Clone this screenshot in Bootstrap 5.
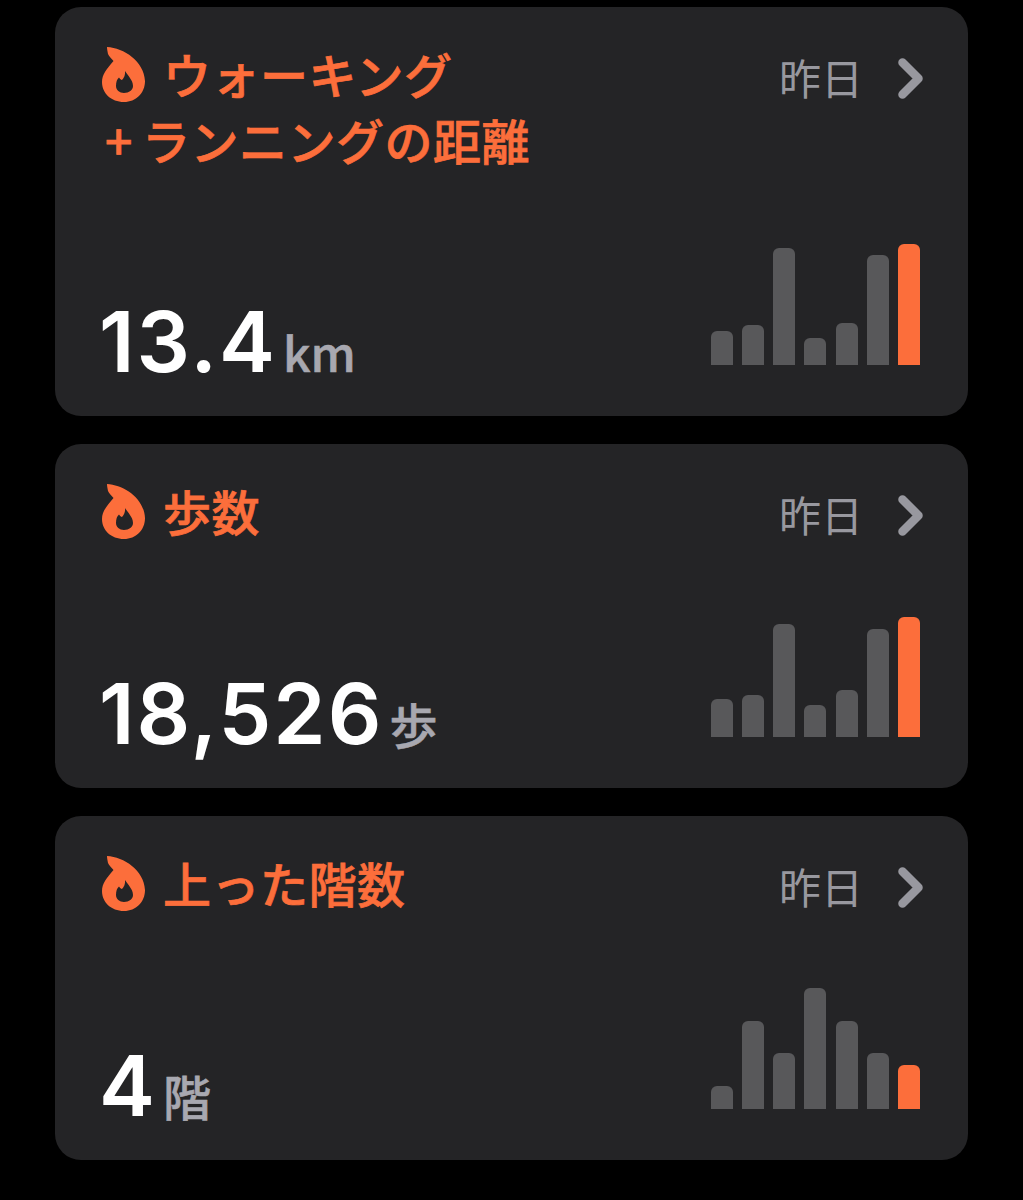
<!DOCTYPE html>
<html lang="ja">
<head>
<meta charset="utf-8">
<link href="https://cdn.jsdelivr.net/npm/bootstrap@5.3.0/dist/css/bootstrap.min.css" rel="stylesheet">
<style>
body{background:#000;font-family:"Noto Sans CJK JP","Inter",sans-serif;}
.stack{padding:7px 55px 0;gap:28px;}
.tile{background:#242426;border-radius:26px;height:344px;padding:0 45px 0 47px;}
.tile-tall{height:409px;}
.head-row{padding-top:33px;}
.flame{width:44px;height:56px;flex:none;margin-top:6px;}
.tile-title{color:#fc6e3b;font-size:48px;font-weight:500;line-height:66px;margin:0;margin-left:17px;letter-spacing:.5px;-webkit-text-stroke:.7px #fc6e3b;}
.tile-title .line2{display:block;margin-left:-61px;}
.plus{margin:0 9px 0 3px;}
.when{color:#98989f;font-size:42px;line-height:66px;gap:35px;margin-top:4px;}
.chev{width:25px;height:41px;flex:none;margin-top:2px;}
.foot-row{margin-top:auto;padding-bottom:32px;}
.big{color:#fff;font-family:"Inter",sans-serif;font-size:84px;font-weight:600;line-height:1;margin-left:-3px;letter-spacing:2px;}
.unit{color:#a8a8b0;font-size:48px;font-weight:500;line-height:1;margin-left:6px;-webkit-text-stroke:.6px #a8a8b0;}
.bars{gap:9.2px;height:121px;margin:0 3px 19px 0;}
.bar{width:22px;background:#58585a;border-radius:6px 6px 0 0;}
.bar-now{background:#fc6e3b;}
</style>
</head>
<body>
<svg width="0" height="0" class="position-absolute">
<defs>
<symbol id="fire" viewBox="0 0 44 56"><path fill-rule="evenodd" fill="#fc6e3b" d="M5 1C22 2 42 15 43 35C43 47 34 56 22 56C9 56 0 47 0 36C0 28 5 23 11.5 15C9.5 13 7 10 6 8C5.5 5 5 3 5 1ZM23 25C26 30 31 34 31 40C31 44 27 47 22 47C17.5 47 14 44 14 40C14 36 15 33 17 31.5C18 33 19 34 20 34C22 32 23.5 29 23 25Z"/></symbol>
</defs>
</svg>
<main class="d-flex flex-column stack">

<section class="tile tile-tall d-flex flex-column">
<div class="head-row d-flex justify-content-between align-items-start">
<div class="d-flex align-items-start">
<svg class="flame"><use href="#fire"/></svg>
<h2 class="tile-title">ウォーキング<span class="line2"><span class="plus">+</span>ランニングの距離</span></h2>
</div>
<div class="when d-flex align-items-center">昨日<svg class="chev" viewBox="0 0 25 41"><path d="M4.5 4.5L20.5 20.5L4.5 36.5" fill="none" stroke="#98989f" stroke-width="8.5" stroke-linecap="round" stroke-linejoin="round"/></svg></div>
</div>
<div class="foot-row d-flex justify-content-between align-items-end">
<div class="d-flex align-items-baseline"><span class="big">13.4</span><span class="unit">km</span></div>
<div class="bars d-flex align-items-end">
<div class="bar" style="height:34px"></div><div class="bar" style="height:40px"></div><div class="bar" style="height:117px"></div><div class="bar" style="height:27px"></div><div class="bar" style="height:42px"></div><div class="bar" style="height:110px"></div><div class="bar bar-now" style="height:121px"></div>
</div>
</div>
</section>

<section class="tile d-flex flex-column">
<div class="head-row d-flex justify-content-between align-items-start">
<div class="d-flex align-items-start">
<svg class="flame"><use href="#fire"/></svg>
<h2 class="tile-title">歩数</h2>
</div>
<div class="when d-flex align-items-center">昨日<svg class="chev" viewBox="0 0 25 41"><path d="M4.5 4.5L20.5 20.5L4.5 36.5" fill="none" stroke="#98989f" stroke-width="8.5" stroke-linecap="round" stroke-linejoin="round"/></svg></div>
</div>
<div class="foot-row d-flex justify-content-between align-items-end">
<div class="d-flex align-items-baseline"><span class="big">18,526</span><span class="unit">歩</span></div>
<div class="bars d-flex align-items-end">
<div class="bar" style="height:38px"></div><div class="bar" style="height:42px"></div><div class="bar" style="height:113px"></div><div class="bar" style="height:32px"></div><div class="bar" style="height:47px"></div><div class="bar" style="height:108px"></div><div class="bar bar-now" style="height:120px"></div>
</div>
</div>
</section>

<section class="tile d-flex flex-column">
<div class="head-row d-flex justify-content-between align-items-start">
<div class="d-flex align-items-start">
<svg class="flame"><use href="#fire"/></svg>
<h2 class="tile-title">上った階数</h2>
</div>
<div class="when d-flex align-items-center">昨日<svg class="chev" viewBox="0 0 25 41"><path d="M4.5 4.5L20.5 20.5L4.5 36.5" fill="none" stroke="#98989f" stroke-width="8.5" stroke-linecap="round" stroke-linejoin="round"/></svg></div>
</div>
<div class="foot-row d-flex justify-content-between align-items-end">
<div class="d-flex align-items-baseline"><span class="big">4</span><span class="unit">階</span></div>
<div class="bars d-flex align-items-end">
<div class="bar" style="height:23px"></div><div class="bar" style="height:88px"></div><div class="bar" style="height:56px"></div><div class="bar" style="height:121px"></div><div class="bar" style="height:88px"></div><div class="bar" style="height:56px"></div><div class="bar bar-now" style="height:44px"></div>
</div>
</div>
</section>

</main>
<script src="https://cdn.jsdelivr.net/npm/bootstrap@5.3.0/dist/js/bootstrap.bundle.min.js"></script>
</body>
</html>
